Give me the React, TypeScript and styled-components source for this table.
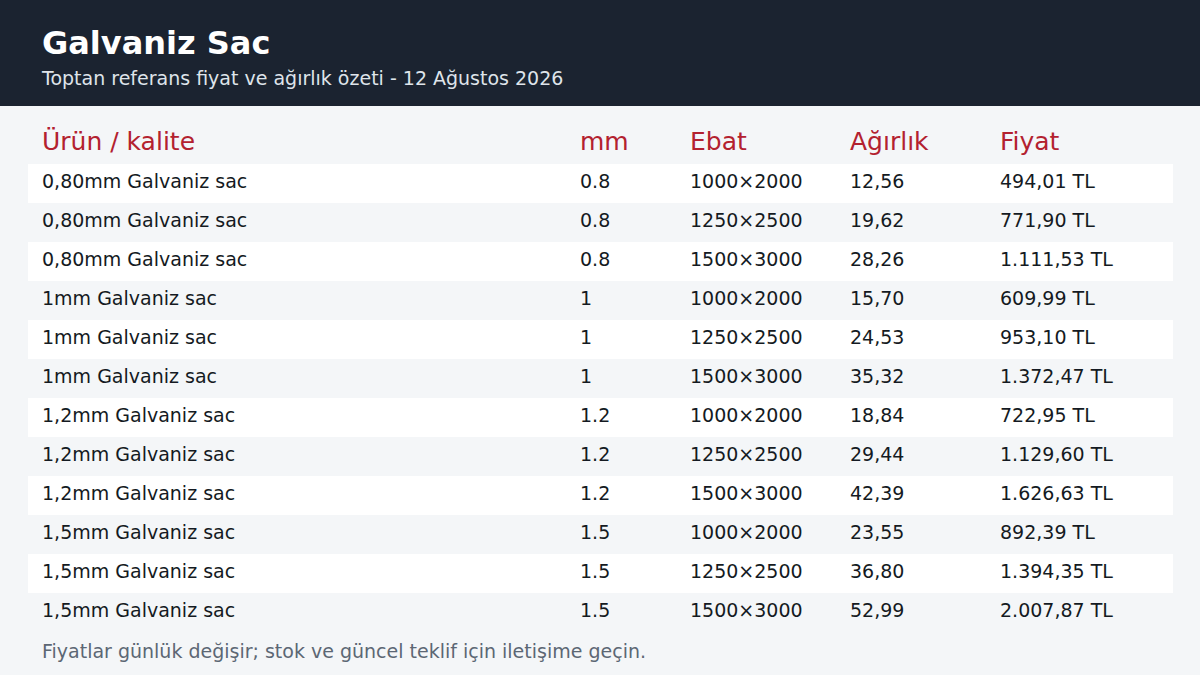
import styled, { createGlobalStyle } from "styled-components";

const GlobalStyle = createGlobalStyle`
    html, body {
        margin: 0;
        padding: 0;
        background: #f4f6f8;
        font-family: "DejaVu Sans", "Liberation Sans", sans-serif;
    }
`;

const Page = styled.div`
    width: 1200px;
    height: 675px;
    background: #f4f6f8;
    display: flex;
    flex-direction: column;
    overflow: hidden;
`;

const Header = styled.header`
    background: #1b2330;
    height: 106px;
    flex-shrink: 0;
    box-sizing: border-box;
    padding: 24px 42px 0;
    display: flex;
    flex-direction: column;
`;

const Title = styled.h1`
    margin: 0;
    font-size: 32px;
    line-height: 38px;
    font-weight: bold;
    color: #ffffff;
`;

const Subtitle = styled.div`
    margin-top: 3px;
    font-size: 19px;
    line-height: 26px;
    color: #dfe4ea;
`;

const Body = styled.main`
    padding: 14px 27px 0 28px;
    display: flex;
    flex-direction: column;
`;

const COLUMNS = "538px 110px 160px 150px 1fr";

const HeadRow = styled.div`
    display: grid;
    grid-template-columns: ${COLUMNS};
    height: 44px;
    align-items: center;
`;

const HeadCell = styled.div`
    padding: 0 14px 2px;
    font-size: 25px;
    color: #b3212f;
    white-space: nowrap;
`;

const Row = styled.div<{ $striped: boolean }>`
    display: grid;
    grid-template-columns: ${COLUMNS};
    height: 39px;
    align-items: center;
    background: ${p => (p.$striped ? "#f4f6f8" : "#ffffff")};
`;

const Cell = styled.div`
    padding: 0 14px 6px;
    font-size: 19px;
    color: #141a22;
    white-space: nowrap;
`;

const Note = styled.p`
    margin: 7px 0 0 14px;
    font-size: 19px;
    line-height: 24px;
    color: #5c6774;
`;

const HEADINGS = ["Ürün / kalite", "mm", "Ebat", "Ağırlık", "Fiyat"];

const ROWS: [string, string, string, string, string][] = [
    ["0,80mm Galvaniz sac", "0.8", "1000×2000", "12,56", "494,01 TL"],
    ["0,80mm Galvaniz sac", "0.8", "1250×2500", "19,62", "771,90 TL"],
    ["0,80mm Galvaniz sac", "0.8", "1500×3000", "28,26", "1.111,53 TL"],
    ["1mm Galvaniz sac", "1", "1000×2000", "15,70", "609,99 TL"],
    ["1mm Galvaniz sac", "1", "1250×2500", "24,53", "953,10 TL"],
    ["1mm Galvaniz sac", "1", "1500×3000", "35,32", "1.372,47 TL"],
    ["1,2mm Galvaniz sac", "1.2", "1000×2000", "18,84", "722,95 TL"],
    ["1,2mm Galvaniz sac", "1.2", "1250×2500", "29,44", "1.129,60 TL"],
    ["1,2mm Galvaniz sac", "1.2", "1500×3000", "42,39", "1.626,63 TL"],
    ["1,5mm Galvaniz sac", "1.5", "1000×2000", "23,55", "892,39 TL"],
    ["1,5mm Galvaniz sac", "1.5", "1250×2500", "36,80", "1.394,35 TL"],
    ["1,5mm Galvaniz sac", "1.5", "1500×3000", "52,99", "2.007,87 TL"],
];

export default function App() {
    return (
        <Page>
            <GlobalStyle />
            <Header>
                <Title>Galvaniz Sac</Title>
                <Subtitle>Toptan referans fiyat ve ağırlık özeti - 12 Ağustos 2026</Subtitle>
            </Header>
            <Body>
                <HeadRow>
                    {HEADINGS.map(h => (
                        <HeadCell key={h}>{h}</HeadCell>
                    ))}
                </HeadRow>
                {ROWS.map((r, i) => (
                    <Row key={i} $striped={i % 2 === 1}>
                        {r.map((c, j) => (
                            <Cell key={j}>{c}</Cell>
                        ))}
                    </Row>
                ))}
                <Note>Fiyatlar günlük değişir; stok ve güncel teklif için iletişime geçin.</Note>
            </Body>
        </Page>
    );
}
